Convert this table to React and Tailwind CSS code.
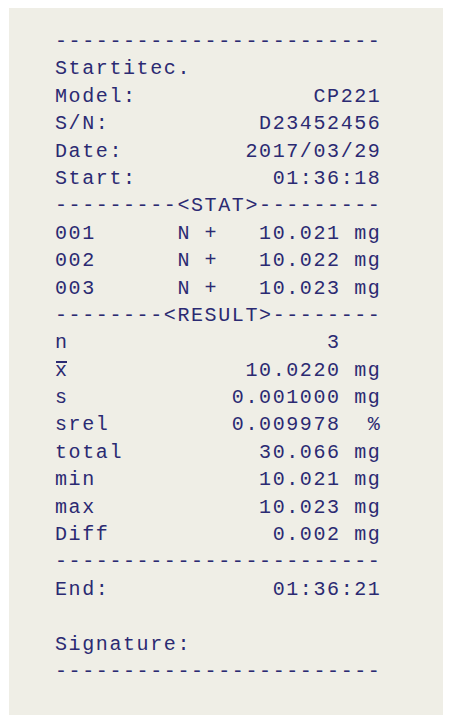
const lines = [
  "------------------------",
  "Startitec.",
  "Model:             CP221",
  "S/N:           D23452456",
  "Date:         2017/03/29",
  "Start:          01:36:18",
  "---------<STAT>---------",
  "001      N +   10.021 mg",
  "002      N +   10.022 mg",
  "003      N +   10.023 mg",
  "--------<RESULT>--------",
  "n                   3",
  "XBAR",
  "s            0.001000 mg",
  "srel         0.009978  %",
  "total          30.066 mg",
  "min            10.021 mg",
  "max            10.023 mg",
  "Diff            0.002 mg",
  "------------------------",
  "End:            01:36:21",
  "",
  "Signature:",
  "------------------------",
];

const PrintLine = ({ text }) => {
  // mean value row: x with a bar over it
  if (text === "XBAR") {
    return (
      <div className="whitespace-pre h-[27.4px]">
        <span className="relative">
          x
          <span className="absolute left-[1px] top-[2px] w-[11px] h-[2px] bg-current" />
        </span>
        {"             10.0220 mg"}
      </div>
    );
  }
  return <div className="whitespace-pre h-[27.4px]">{text || " "}</div>;
};

export default function App() {
  return (
    <div className="w-[452px] h-[725px] bg-white pt-2 pl-[9px]">
      <div className="w-[434px] h-[707px] bg-[#efeee6] pt-[20px] pl-[46px]">
        <div
          className="text-[20px] leading-[27.4px] tracking-[1.6px] text-[#2b2a72]"
          style={{ fontFamily: '"Liberation Mono", "DejaVu Sans Mono", monospace' }}
        >
          {lines.map((line, i) => (
            <PrintLine key={i} text={line} />
          ))}
        </div>
      </div>
    </div>
  );
}
